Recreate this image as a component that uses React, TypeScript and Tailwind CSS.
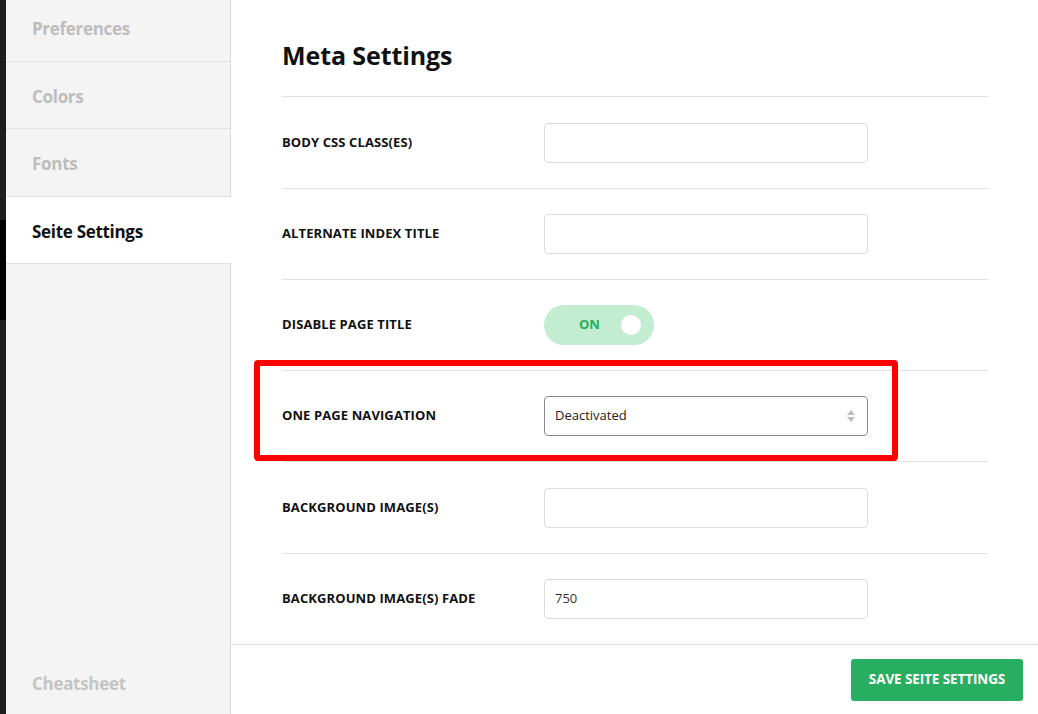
import React from 'react';

const navItems = [
  { label: 'Preferences', cls: 'h-[62px] pb-[4px]' },
  { label: 'Colors', cls: 'h-[67px] pt-[4px]' },
  { label: 'Fonts', cls: 'h-[68px] pt-[2px]' },
  { label: 'Seite Settings', cls: 'h-[67px] pt-[4px]', active: true },
];

const TextInput: React.FC<{ value?: string }> = ({ value }) => (
  <div className="w-[324px] h-[40px] border border-[#dcdcdc] rounded-[4px] bg-white flex items-center px-[10px] text-[13px] text-[#333]">
    {value}
  </div>
);

const Toggle: React.FC = () => (
  <div className="w-[110px] h-[40px] rounded-full bg-[#c2edd3] flex items-center pl-[35px] pr-[13px] justify-between">
    <span className="text-[13px] font-bold text-[#27ae60]">ON</span>
    <span className="w-[20px] h-[20px] rounded-full bg-white" />
  </div>
);

const SelectBox: React.FC = () => (
  <div className="w-[324px] h-[40px] border border-[#8a8a8a] rounded-[4px] bg-white flex items-center justify-between pl-[10px] pr-[10px] text-[13px] text-[#222]">
    <span>Deactivated</span>
    <svg width="12" height="16" viewBox="0 0 12 16">
      <path d="M6 2 L10 7 L2 7 Z" fill="#bdbdbd" />
      <path d="M2 9 L10 9 L6 14 Z" fill="#bdbdbd" />
    </svg>
  </div>
);

const rows: { label: string; h: string; control: React.ReactNode }[] = [
  { label: 'Body CSS Class(es)', h: 'h-[92px]', control: <TextInput /> },
  { label: 'Alternate Index Title', h: 'h-[91px]', control: <TextInput /> },
  { label: 'Disable Page Title', h: 'h-[91px]', control: <Toggle /> },
  { label: 'One Page Navigation', h: 'h-[91px]', control: <SelectBox /> },
  { label: 'Background Image(s)', h: 'h-[92px]', control: <TextInput /> },
  { label: 'Background Image(s) Fade', h: 'h-[91px]', control: <TextInput value="750" /> },
];

export default function App() {
  return (
    <div
      className="w-[1038px] h-[714px] flex bg-white overflow-hidden"
      style={{ fontFamily: '"Open Sans", "Noto Sans", sans-serif' }}
    >
      {/* window edge behind the panel */}
      <div className="w-[6px] flex flex-col">
        <div className="h-[220px] bg-[#1e1e1e]" />
        <div className="h-[100px] bg-black" />
        <div className="flex-1 bg-[#1e1e1e]" />
      </div>

      {/* sidebar */}
      <div className="w-[225px] bg-[#f4f4f4] border-r border-[#dcdcdc] flex flex-col">
        {navItems.map((item) => (
          <div
            key={item.label}
            className={`${item.cls} flex items-center pl-[26px] border-b border-[#e2e2e2] text-[17px] font-bold tracking-[-0.3px] ${
              item.active ? 'bg-white text-[#111] mr-[-1px]' : 'text-[#bdbdbd]'
            }`}
          >
            {item.label}
          </div>
        ))}
        <div className="flex-1" />
        <div className="h-[60px] flex items-center pl-[26px] text-[17px] font-bold tracking-[-0.3px] text-[#c4c4c4]">
          Cheatsheet
        </div>
      </div>

      {/* main panel */}
      <div className="flex-1 flex flex-col relative">
        <div className="flex-1 overflow-hidden pl-[51px] pr-[50px]">
          <h1 className="pt-[37px] h-[97px] text-[25px] font-bold text-[#111] tracking-[-0.1px] border-b border-[#e2e2e2]">
            Meta Settings
          </h1>
          {rows.map((row) => (
            <div key={row.label} className={`${row.h} flex items-center border-b border-[#e2e2e2]`}>
              <div className="w-[262px] text-[13px] font-bold uppercase text-[#111] tracking-[0.1px]">
                {row.label}
              </div>
              {row.control}
            </div>
          ))}
        </div>

        <div className="h-[70px] shrink-0 border-t border-[#e0e0e0] shadow-[0_-2px_4px_rgba(0,0,0,0.04)] bg-white flex items-center justify-end pr-[15px]">
          <button className="h-[42px] w-[172px] rounded-[3px] bg-[#27ae60] text-white text-[13.5px] font-bold tracking-[-0.1px]">
            SAVE SEITE SETTINGS
          </button>
        </div>

        {/* highlight frame */}
        <div className="absolute left-[23px] top-[360px] w-[644px] h-[101px] border-[6px] border-[#ff0000] rounded-[4px] pointer-events-none" />
      </div>
    </div>
  );
}
